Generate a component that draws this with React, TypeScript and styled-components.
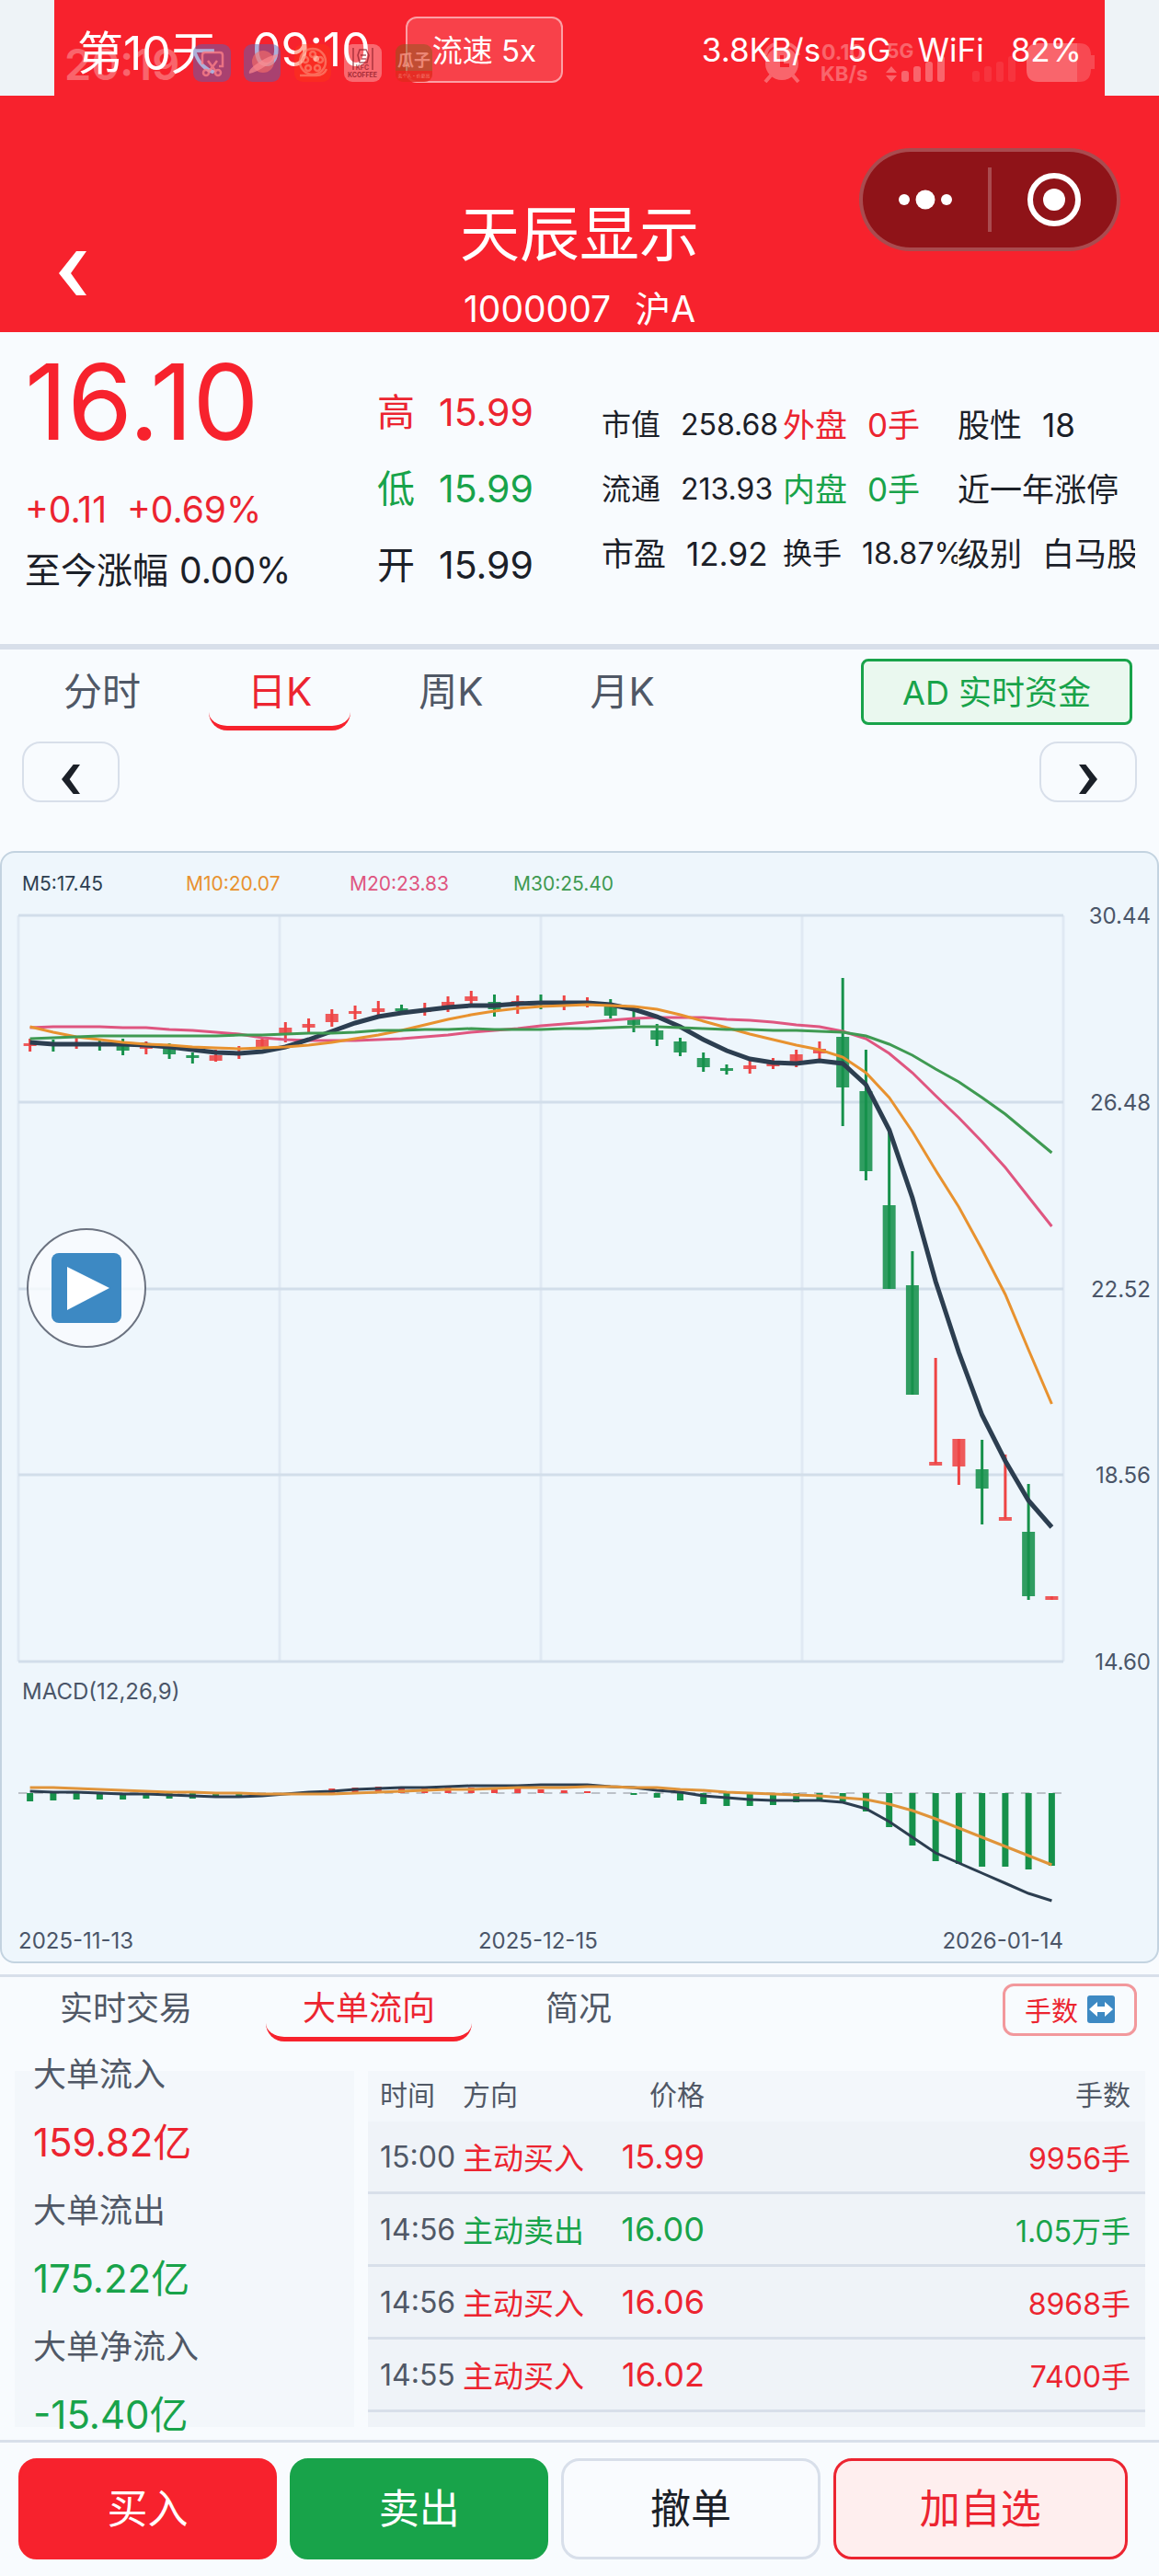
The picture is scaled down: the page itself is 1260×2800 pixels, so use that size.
import React, { useState } from "react";
import styled, { createGlobalStyle } from "styled-components";

const color = {
  red: "#f7222d",
  redText: "#ec2430",
  green: "#18a34a",
  ink: "#1b2028",
  muted: "#505866",
  axis: "#4a5568",
  page: "#f8fbfe",
  line: "#d8dfea",
  panel: "#f3f7fb",
};

const GlobalStyle = createGlobalStyle`
  * { box-sizing: border-box; }
  body {
    margin: 0;
    background: ${color.page};
    color: ${color.ink};
    font-family: Inter, "Noto Sans CJK SC", sans-serif;
  }
  button { font-family: inherit; cursor: pointer; }
`;

type Tone = "up" | "down" | "plain";
const toneColor = (tone?: Tone) =>
  tone === "up" ? color.redText : tone === "down" ? color.green : color.ink;

const Page = styled.div`
  width: 100%;
  overflow: hidden;
`;

/* ---------- status bar ---------- */

const StatusFrame = styled.div`
  padding: 0 59px;
  background: #eef3f7;
`;

const StatusBar = styled.div`
  position: relative;
  display: flex;
  align-items: center;
  justify-content: space-between;
  height: 104px;
  padding: 0 25px;
  background: ${color.red};
  color: #fff;
  white-space: nowrap;
`;

const StatusGroup = styled.div<{ $gap: number; $size: number }>`
  display: flex;
  align-items: center;
  gap: ${(p) => p.$gap}px;
  padding-top: 3px;
  font-size: ${(p) => p.$size}px;
`;

const SpeedButton = styled.button`
  height: 72px;
  padding: 0 27px 2px;
  border: 2px solid rgba(255, 255, 255, 0.5);
  border-radius: 12px;
  background: rgba(255, 255, 255, 0.14);
  color: #fff;
  font-size: 33px;
`;

const GhostLeft = styled.svg`
  position: absolute;
  left: 11px;
  top: 44px;
  overflow: visible;
`;

const GhostRight = styled.svg`
  position: absolute;
  right: 8px;
  top: 44px;
`;

/* ---------- header ---------- */

const Header = styled.header`
  display: grid;
  grid-template-columns: 1fr auto 1fr;
  height: 257px;
  padding: 0 42px 0 42px;
  background: ${color.red};
  color: #fff;
`;

const BackButton = styled.button`
  align-self: end;
  justify-self: start;
  display: flex;
  padding: 24px 22px;
  margin-bottom: 16px;
  border: 0;
  background: none;
`;

const TitleBlock = styled.div`
  align-self: end;
  display: flex;
  flex-direction: column;
  align-items: center;
  gap: 16px;
`;

const Title = styled.h1`
  margin: 0;
  font-size: 65px;
  line-height: 80px;
  font-weight: 400;
`;

const Subtitle = styled.div`
  display: flex;
  gap: 26px;
  font-size: 39px;
  line-height: 50px;
`;

const Capsule = styled.div`
  justify-self: end;
  display: flex;
  align-items: center;
  width: 284px;
  height: 112px;
  margin-top: 57px;
  border: 4px solid rgba(255, 255, 255, 0.24);
  border-radius: 56px;
  background: #8f1318;
`;

const CapsuleButton = styled.button`
  flex: 1;
  display: flex;
  justify-content: center;
  padding: 0;
  border: 0;
  background: none;
`;

const CapsuleRule = styled.span`
  width: 4px;
  height: 70px;
  background: rgba(255, 255, 255, 0.24);
`;

/* ---------- quote ---------- */

const Quote = styled.section`
  display: grid;
  grid-template-columns: minmax(0, 383fr) minmax(0, 244fr) minmax(0, 197fr) minmax(0, 190fr) minmax(0, 193fr);
  height: 345px;
  padding: 16px 26px 0 27px;
  border-bottom: 6px solid ${color.line};
  white-space: nowrap;
`;

const PriceColumn = styled.div`
  display: flex;
  flex-direction: column;
`;

const Price = styled.div`
  margin-bottom: 24px;
  color: ${color.red};
  font-size: 114px;
  line-height: 120px;
`;

const ChangeLine = styled.div<{ $tone: Tone; $gap: number }>`
  display: flex;
  gap: ${(p) => p.$gap}px;
  color: ${(p) => toneColor(p.$tone)};
  font-size: 39px;
  line-height: 66px;
`;

const RangeColumn = styled.div`
  padding-top: 30px;
`;

const RangeRow = styled.div<{ $tone: Tone }>`
  display: flex;
  gap: 26px;
  color: ${(p) => toneColor(p.$tone)};
  font-size: 41px;
  line-height: 83px;
`;

const StatColumn = styled.div`
  padding-top: 50px;
  overflow-x: clip;
`;

const StatRow = styled.div<{ $tone?: Tone; $small?: boolean }>`
  display: flex;
  gap: 22px;
  color: ${(p) => toneColor(p.$tone)};
  font-size: ${(p) => (p.$small ? 32 : 35)}px;
  line-height: 70px;
`;

/* ---------- tabs ---------- */

const TabRow = styled.div<{ $compact?: boolean }>`
  display: flex;
  align-items: flex-start;
  justify-content: space-between;
  padding: ${(p) => (p.$compact ? "0 24px 0 25px" : "0 29px 0 27px")};
`;

const TabList = styled.div<{ $gap: number }>`
  display: flex;
  gap: ${(p) => p.$gap}px;
`;

const Tab = styled.button<{ $active: boolean; $compact?: boolean }>`
  padding: ${(p) => (p.$compact ? "10px 40px 7px" : "16px 42px 7px")};
  border: 0 solid transparent;
  border-bottom: 5px solid ${(p) => (p.$active ? color.red : "transparent")};
  border-radius: 20px;
  background: none;
  color: ${(p) => (p.$active ? color.redText : color.muted)};
  font-size: ${(p) => (p.$compact ? 36 : 42)}px;
  line-height: ${(p) => (p.$compact ? 48 : 60)}px;
`;

const FundButton = styled.button`
  height: 72px;
  margin-top: 10px;
  padding: 0 42px 4px;
  border: 3px solid ${color.green};
  border-radius: 8px;
  background: #eaf8ef;
  color: ${color.green};
  font-size: 36px;
`;

const PagerRow = styled.div`
  display: flex;
  justify-content: space-between;
  padding: 12px 24px 53px;
`;

const PagerButton = styled.button`
  display: flex;
  align-items: center;
  justify-content: center;
  width: 106px;
  height: 66px;
  padding: 16px 0 0;
  border: 2px solid ${color.line};
  border-radius: 20px;
  background: none;
`;

/* ---------- chart ---------- */

const ChartPanel = styled.section`
  border: 2px solid #c3d3e0;
  border-radius: 16px;
  background: #eef6fc;
  color: ${color.axis};
  font-size: 24px;
`;

const Legend = styled.div`
  display: grid;
  grid-template-columns: repeat(4, 178px);
  padding-left: 22px;
  font-size: 21px;
  line-height: 68px;
`;

const LegendItem = styled.span<{ $color: string }>`
  color: ${(p) => p.$color};
`;

const PlotRow = styled.div`
  position: relative;
  display: flex;
  padding-left: 18px;
`;

const PlotArea = styled.div`
  flex: 1;
  min-width: 0;
`;

const Plot = styled.svg`
  display: block;
  width: 100%;
  height: auto;
  overflow: visible;
`;

const PriceScale = styled.div`
  display: flex;
  flex-direction: column;
  justify-content: space-between;
  align-items: flex-end;
  width: 102px;
  margin: -12px 0 -14px;
  padding-right: 7px;
  line-height: 26px;
`;

const PlayButton = styled.button`
  position: absolute;
  left: 27px;
  top: 340px;
  display: flex;
  align-items: center;
  justify-content: center;
  width: 130px;
  height: 130px;
  padding: 0;
  border: 2px solid #6b7280;
  border-radius: 50%;
  background: rgba(249, 251, 254, 0.8);
`;

const MacdArea = styled.div`
  margin: 16px 102px 0 18px;
`;

const MacdLabel = styled.div`
  padding-left: 4px;
  margin-bottom: 4px;
  line-height: 34px;
`;

const Dates = styled.div`
  display: flex;
  justify-content: space-between;
  margin-top: 8px;
  line-height: 44px;
`;

/* ---------- order flow ---------- */

const FlowSection = styled.section`
  margin-top: 12px;
  border-top: 3px solid ${color.line};
`;

const UnitButton = styled.button`
  display: flex;
  align-items: center;
  gap: 10px;
  height: 57px;
  margin-top: 7px;
  padding: 0 21px 2px;
  border: 3px solid #f2989c;
  border-radius: 12px;
  background: none;
  color: ${color.redText};
  font-size: 29px;
`;

const FlowBody = styled.div`
  display: grid;
  grid-template-columns: minmax(0, 369fr) minmax(0, 845fr);
  grid-template-rows: minmax(0, 1fr);
  gap: 15px;
  height: 387px;
  margin: 32px 15px 14px 16px;
`;

const FlowSummary = styled.dl`
  display: flex;
  flex-direction: column;
  justify-content: center;
  margin: 0;
  padding: 0 0 10px 20px;
  background: ${color.panel};
  line-height: 74px;
`;

const FlowLabel = styled.dt`
  flex: none;
  color: ${color.muted};
  font-size: 36px;
`;

const FlowValue = styled.dd<{ $tone: Tone }>`
  flex: none;
  margin: 0;
  color: ${(p) => toneColor(p.$tone)};
  font-size: 42px;
`;

const TradeViewport = styled.div`
  overflow: hidden;
  background: #eff3f8;
`;

const TradeTable = styled.table`
  width: 100%;
  border-collapse: separate;
  border-spacing: 0;
  table-layout: fixed;
  white-space: nowrap;
`;

const HeadCell = styled.th<{ $right?: boolean; $width?: number }>`
  width: ${(p) => (p.$width ? `${p.$width}px` : "auto")};
  height: 55px;
  padding: 0 0 4px;
  background: ${color.panel};
  color: ${color.muted};
  font-size: 30px;
  line-height: 36px;
  font-weight: 400;
  text-align: ${(p) => (p.$right ? "right" : "left")};
  &:first-child { padding-left: 13px; }
  &:last-child { padding-right: 16px; }
`;

const Cell = styled.td<{ $right?: boolean; $tone?: Tone; $size: number }>`
  height: 79px;
  padding: 0;
  border-bottom: 3px solid ${color.line};
  color: ${(p) => (p.$tone ? toneColor(p.$tone) : color.muted)};
  font-size: ${(p) => p.$size}px;
  text-align: ${(p) => (p.$right ? "right" : "left")};
  &:first-child { padding-left: 13px; }
  &:last-child { padding-right: 16px; }
`;

/* ---------- actions ---------- */

const ActionBar = styled.footer`
  display: grid;
  grid-template-columns: repeat(3, minmax(0, 281fr)) minmax(0, 320fr);
  gap: 14px;
  padding: 17px 34px 18px 20px;
  border-top: 3px solid ${color.line};
`;

const ActionButton = styled.button<{ $bg: string; $fg: string; $edge: string }>`
  height: 110px;
  padding: 0 0 6px;
  border: 3px solid ${(p) => p.$edge};
  border-radius: 20px;
  background: ${(p) => p.$bg};
  color: ${(p) => p.$fg};
  font-size: 44px;
`;

/* ---------- data ---------- */

// Each candle: high, low, body top, body bottom (offsets in the plot), rising flag.
const candles: [number, number, number, number, 0 | 1][] = [
  [134, 148, 139, 142, 1], [135, 148, 138, 141, 0], [133, 145, 139, 141, 1],
  [136, 147, 139, 141, 0], [134, 152, 140, 147, 0], [137, 151, 142, 145, 1],
  [139, 156, 145, 151, 0], [149, 161, 152, 155, 0], [146, 159, 152, 158, 1],
  [142, 156, 148, 151, 1], [133, 145, 135, 144, 1], [116, 138, 122, 130, 1],
  [112, 127, 118, 122, 1], [102, 121, 107, 116, 1], [98, 113, 104, 107, 1],
  [93, 109, 101, 105, 1], [97, 106, 101, 104, 0], [95, 109, 103, 105, 1],
  [88, 105, 94, 101, 1], [82, 96, 88, 93, 1], [86, 110, 94, 102, 0],
  [87, 107, 93, 98, 1], [86, 102, 94, 96, 0], [87, 103, 94, 96, 1],
  [89, 100, 94, 96, 1], [91, 112, 99, 109, 0], [104, 127, 112, 119, 0],
  [118, 142, 125, 135, 0], [133, 153, 137, 149, 0], [149, 170, 155, 165, 0],
  [162, 173, 166, 169, 0], [158, 172, 163, 167, 1], [155, 167, 161, 164, 1],
  [146, 165, 151, 159, 1], [137, 156, 145, 150, 1], [68, 229, 132, 187, 0],
  [146, 288, 191, 278, 0], [236, 406, 315, 406, 0], [365, 521, 402, 521, 0],
  [481, 596, 594, 598, 1], [569, 619, 569, 599, 1], [570, 662, 602, 623, 0],
  [586, 656, 654, 658, 1], [618, 744, 670, 740, 0], [740, 744, 740, 744, 1],
];

const averages = [
  {
    label: "M20:23.83", color: "#df5680", width: 3,
    points: [122, 121, 121, 121, 122, 122, 124, 125, 127, 129, 133, 135, 136, 136, 136, 135, 134, 132, 130, 127, 125, 123, 120, 118, 116, 114, 112, 111, 111, 111, 113, 114, 116, 119, 121, 126, 134, 150, 171, 196, 220, 246, 274, 306, 338],
  },
  {
    label: "M5:17.45", color: "#2c3e50", width: 5,
    points: [138, 140, 140, 140, 140, 141, 143, 146, 149, 150, 148, 143, 135, 126, 117, 110, 106, 103, 100, 98, 98, 96, 95, 95, 95, 97, 102, 110, 121, 135, 147, 156, 160, 161, 158, 161, 184, 233, 307, 398, 475, 543, 593, 636, 665],
  },
  {
    label: "M10:20.07", color: "#e8922f", width: 3,
    points: [121, 127, 132, 135, 138, 140, 141, 143, 144, 145, 144, 143, 141, 138, 134, 130, 125, 119, 113, 108, 104, 101, 99, 98, 97, 98, 99, 102, 108, 115, 122, 129, 135, 141, 146, 154, 171, 198, 235, 277, 317, 363, 412, 472, 531],
  },
  {
    label: "M30:25.40", color: "#3f9a52", width: 3,
    points: [134, 133, 132, 131, 131, 131, 131, 131, 131, 130, 130, 129, 128, 128, 127, 125, 125, 124, 124, 123, 124, 124, 124, 123, 123, 122, 121, 121, 122, 123, 124, 124, 125, 125, 126, 127, 131, 140, 152, 167, 181, 198, 216, 237, 258],
  },
];
const legendOrder = [1, 2, 0, 3];

const histogram = [9, 8, 7, 7, 7, 6, 6, 6, 5, 3, 1, 0, -2, -5, -6, -7, -6, -6, -6, -6, -6, -5, -4, -3, -2, 0, 2, 5, 8, 12, 14, 14, 13, 10, 8, 9, 20, 37, 57, 74, 77, 80, 80, 83, 79];
const dif = [-2, -1, -1, 0, 1, 1, 2, 3, 4, 4, 3, 1, -1, -2, -4, -5, -6, -6, -7, -8, -8, -8, -9, -9, -9, -7, -6, -3, -1, 3, 5, 7, 8, 8, 8, 10, 17, 31, 48, 65, 76, 87, 98, 109, 117];
const dea = [-6, -6, -5, -4, -3, -2, -1, -1, 0, 0, 1, 1, 1, 1, 0, -1, -2, -3, -4, -4, -5, -6, -6, -6, -7, -7, -6, -6, -4, -3, -1, 0, 1, 2, 3, 5, 7, 12, 19, 28, 38, 48, 58, 68, 78];

const PLOT_W = 1136;
const PLOT_H = 811;
const STEP = PLOT_W / candles.length;
const xAt = (i: number) => (i + 0.5) * STEP;
const toPoints = (values: number[], base = 0) =>
  values.map((v, i) => `${xAt(i).toFixed(1)},${v + base}`).join(" ");

const flows: { label: string; value: string; tone: Tone }[] = [
  { label: "大单流入", value: "159.82亿", tone: "up" },
  { label: "大单流出", value: "175.22亿", tone: "down" },
  { label: "大单净流入", value: "-15.40亿", tone: "down" },
];

const trades: { time: string; side: string; price: string; volume: string; tone: Tone }[] = [
  { time: "15:00", side: "主动买入", price: "15.99", volume: "9956手", tone: "up" },
  { time: "14:56", side: "主动卖出", price: "16.00", volume: "1.05万手", tone: "down" },
  { time: "14:56", side: "主动买入", price: "16.06", volume: "8968手", tone: "up" },
  { time: "14:55", side: "主动买入", price: "16.02", volume: "7400手", tone: "up" },
];

/* ---------- drawings ---------- */

function Chevron({ height, fill, flip }: { height: number; fill: string; flip?: boolean }) {
  return (
    <svg width={(height * 5) / 8} height={height} viewBox="0 0 30 48" aria-hidden="true">
      <path d={flip ? "M0 0h11l19 24-19 24H0l17-24z" : "M30 0H19L0 24l19 24h11L13 24z"} fill={fill} />
    </svg>
  );
}

function GhostIconsLeft() {
  return (
    <GhostLeft width="410" height="50" viewBox="70 44 410 50" aria-hidden="true">
      <text x="70" y="87" fontSize="47" fontWeight="600" fill="#fff" opacity="0.3" fontFamily="Inter">20:19</text>
      <g>
        <rect x="210" y="48" width="41" height="41" rx="9" fill="#5c5fb4" opacity="0.5" />
        <g fill="none" stroke="#fb7f88" strokeWidth="2.5" opacity="0.8">
          <path d="M220 70V60q0-3 3-3h16q3 0 3 3v12h-4" />
          <path d="M226 66l9 12M236 66l-9 12" />
          <circle cx="224" cy="79" r="3" />
          <circle cx="237" cy="79" r="3" />
        </g>
      </g>
      <g>
        <rect x="265" y="48" width="40" height="41" rx="9" fill="#5c5fb4" opacity="0.5" />
        <circle cx="286" cy="67" r="12" fill="#fb6f68" opacity="0.6" />
        <path d="M271 80q-2-4 10-12t21-9q0 4-12 12t-19 9z" fill="#fb8a90" opacity="0.7" />
      </g>
      <g>
        <rect x="320" y="48" width="40" height="41" rx="9" fill="#ff3a12" opacity="0.4" />
        <g fill="none" stroke="#fd8c76" strokeWidth="2.5" opacity="0.65">
          <circle cx="340" cy="67" r="14" />
          <circle cx="340" cy="59" r="3" />
          <circle cx="332" cy="65" r="3" />
          <circle cx="348" cy="65" r="3" />
          <circle cx="335" cy="74" r="3" />
          <circle cx="345" cy="74" r="3" />
          <path d="M326 82h18q8 0 11-7" />
        </g>
      </g>
      <g>
        <rect x="374" y="48" width="41" height="41" rx="9" fill="#fff" opacity="0.32" />
        <g fill="none" stroke="#8f1c2a" strokeWidth="1.5" opacity="0.7">
          <path d="M391 54h7l3 6-2 8h-8l-2-8z" />
          <path d="M392 60h6M393 64h5M384 52v24M405 52v24" />
        </g>
        <text x="394" y="76" fontSize="7" fontWeight="700" fill="#8f1c2a" opacity="0.7" textAnchor="middle" fontFamily="Inter">KFC</text>
        <text x="394" y="84" fontSize="7" fontWeight="700" fill="#8f1c2a" opacity="0.8" textAnchor="middle" fontFamily="Inter">KCOFFEE</text>
      </g>
      <g>
        <rect x="430" y="48" width="40" height="41" rx="9" fill="#8a5a1c" opacity="0.5" />
        <path d="M430 77h40v3q0 9-9 9h-22q-9 0-9-9z" fill="#f5201f" opacity="0.7" />
        <text x="450" y="72" fontSize="18" fontWeight="700" fill="#fb9a8c" opacity="0.75" textAnchor="middle" fontFamily="Noto Sans CJK SC">瓜子</text>
        <text x="450" y="84" fontSize="5" fill="#fb9a8c" opacity="0.75" textAnchor="middle" fontFamily="Noto Sans CJK SC">卖个人·价更高</text>
      </g>
    </GhostLeft>
  );
}

function GhostIconsRight() {
  return (
    <GhostRight width="364" height="50" viewBox="829 44 364 50" fill="#fff" aria-hidden="true">
      <g opacity="0.3">
        <circle cx="850" cy="69" r="18" />
        <path d="M832 60q2-9 10-12M868 60q-2-9-10-12M838 82l-6 7M862 82l6 7" fill="none" stroke="#fff" strokeWidth="4" />
        <path d="M850 60v11h8" fill="none" stroke={color.red} strokeWidth="4" />
        <text x="893" y="65" fontSize="23" fontWeight="700" fontFamily="Inter">0.10</text>
        <text x="892" y="88" fontSize="22" fontWeight="700" fontFamily="Inter">KB/s</text>
        <text x="964" y="63" fontSize="21" fontWeight="700" fontFamily="Inter">5G</text>
        <path d="M963 79l6-7 6 7zM963 82l6 7 6-7z" />
        <rect x="980" y="77" width="8" height="12" rx="3" />
        <rect x="993" y="72" width="8" height="17" rx="3" />
        <rect x="1006" y="67" width="8" height="22" rx="3" />
        <rect x="1019" y="61" width="8" height="28" rx="3" />
        <path d="M1129 47h42v42h-42q-13 0-13-13V60q0-13 13-13z" />
      </g>
      <g opacity="0.08">
        <rect x="1057" y="77" width="8" height="12" rx="3" />
        <rect x="1070" y="72" width="8" height="17" rx="3" />
        <rect x="1083" y="67" width="8" height="22" rx="3" />
        <rect x="1096" y="61" width="8" height="28" rx="3" />
      </g>
      <path d="M1171 47h2q13 0 13 13h4v15h-4q0 14-13 14h-2z" opacity="0.18" />
    </GhostRight>
  );
}

function CandlePlot() {
  return (
    <Plot viewBox={`0 0 ${PLOT_W} ${PLOT_H}`} role="img" aria-label="日K">
      {[0, 1, 2, 3, 4].map((n) => (
        <line key={`v${n}`} x1={n * 284} x2={n * 284} y1="0" y2={PLOT_H} stroke="#e0e9f3" strokeWidth="3" />
      ))}
      {[0, 203, 406, 608, 811].map((y) => (
        <line key={`h${y}`} x1="0" x2={PLOT_W} y1={y} y2={y} stroke="#d2deea" strokeWidth="3" />
      ))}
      {candles.map(([high, low, top, bottom, rising], i) => {
        const fill = rising ? "#ee4444" : "#16914b";
        return (
          <g key={i} fill={fill}>
            <rect x={xAt(i) - 7} y={top} width="14" height={bottom - top} opacity="0.88" />
            <rect x={xAt(i) - 1.5} y={high} width="3" height={low - high} />
          </g>
        );
      })}
      {averages.map((line) => (
        <polyline key={line.label} points={toPoints(line.points)} fill="none" stroke={line.color} strokeWidth={line.width} />
      ))}
    </Plot>
  );
}

function MacdPlot() {
  const zero = 89;
  return (
    <Plot viewBox={`0 0 ${PLOT_W} 220`} role="img" aria-label="MACD">
      <line x1="0" x2={PLOT_W} y1={zero} y2={zero} stroke="#bcc1c8" strokeWidth="2" strokeDasharray="9.5 7.8" />
      {histogram.map((v, i) => (
        <rect key={i} x={xAt(i) - 3.5} y={v < 0 ? zero + v : zero} width="7" height={Math.abs(v)} fill={v < 0 ? "#ee4444" : "#16914b"} />
      ))}
      <polyline points={toPoints(dif, zero)} fill="none" stroke="#2c3e50" strokeWidth="3" />
      <polyline points={toPoints(dea, zero)} fill="none" stroke="#e0943a" strokeWidth="3" />
    </Plot>
  );
}

/* ---------- page ---------- */

export default function App() {
  const [period, setPeriod] = useState("日K");
  const [view, setView] = useState("大单流向");

  return (
    <Page>
      <GlobalStyle />
      <StatusFrame>
        <StatusBar>
          <StatusGroup $gap={38} $size={50}>
            <span>第10天</span>
            <span>09:10</span>
            <SpeedButton type="button">流速 5x</SpeedButton>
          </StatusGroup>
          <StatusGroup $gap={29} $size={35}>
            <span>3.8KB/s</span>
            <span>5G</span>
            <span>WiFi</span>
            <span>82%</span>
          </StatusGroup>
          <GhostIconsLeft />
          <GhostIconsRight />
        </StatusBar>
      </StatusFrame>

      <Header>
        <BackButton type="button" aria-label="返回">
          <Chevron height={48} fill="#fff" />
        </BackButton>
        <TitleBlock>
          <Title>天辰显示</Title>
          <Subtitle>
            <span>1000007</span>
            <span>沪A</span>
          </Subtitle>
        </TitleBlock>
        <Capsule>
          <CapsuleButton type="button" aria-label="更多">
            <svg width="60" height="22" viewBox="0 0 60 22" fill="#fff">
              <circle cx="7" cy="11" r="6" />
              <circle cx="30" cy="11" r="10.5" />
              <circle cx="53" cy="11" r="6" />
            </svg>
          </CapsuleButton>
          <CapsuleRule />
          <CapsuleButton type="button" aria-label="关闭">
            <svg width="60" height="60" viewBox="0 0 60 60" fill="#fff">
              <circle cx="30" cy="30" r="26" fill="none" stroke="#fff" strokeWidth="6" />
              <circle cx="30" cy="30" r="12" />
            </svg>
          </CapsuleButton>
        </Capsule>
      </Header>

      <Quote>
        <PriceColumn>
          <Price>16.10</Price>
          <ChangeLine $tone="up" $gap={22}>
            <span>+0.11</span>
            <span>+0.69%</span>
          </ChangeLine>
          <ChangeLine $tone="plain" $gap={12}>
            <span>至今涨幅</span>
            <span>0.00%</span>
          </ChangeLine>
        </PriceColumn>
        <RangeColumn>
          <RangeRow $tone="up"><span>高</span><span>15.99</span></RangeRow>
          <RangeRow $tone="down"><span>低</span><span>15.99</span></RangeRow>
          <RangeRow $tone="plain"><span>开</span><span>15.99</span></RangeRow>
        </RangeColumn>
        <StatColumn>
          <StatRow $small><span>市值</span><span>258.68</span></StatRow>
          <StatRow $small><span>流通</span><span>213.93</span></StatRow>
          <StatRow><span>市盈</span><span>12.92</span></StatRow>
        </StatColumn>
        <StatColumn>
          <StatRow $tone="up"><span>外盘</span><span>0手</span></StatRow>
          <StatRow $tone="down"><span>内盘</span><span>0手</span></StatRow>
          <StatRow $small><span>换手</span><span>18.87%</span></StatRow>
        </StatColumn>
        <StatColumn>
          <StatRow><span>股性</span><span>18</span></StatRow>
          <StatRow><span>近一年涨停</span></StatRow>
          <StatRow><span>级别</span><span>白马股</span></StatRow>
        </StatColumn>
      </Quote>

      <TabRow>
        <TabList $gap={32} role="tablist">
          {["分时", "日K", "周K", "月K"].map((name) => (
            <Tab key={name} type="button" role="tab" aria-selected={period === name} $active={period === name} onClick={() => setPeriod(name)}>
              {name}
            </Tab>
          ))}
        </TabList>
        <FundButton type="button">AD 实时资金</FundButton>
      </TabRow>
      <PagerRow>
        <PagerButton type="button" aria-label="上一只">
          <Chevron height={32} fill={color.ink} />
        </PagerButton>
        <PagerButton type="button" aria-label="下一只">
          <Chevron height={32} fill={color.ink} flip />
        </PagerButton>
      </PagerRow>

      <ChartPanel>
        <Legend>
          {legendOrder.map((n) => (
            <LegendItem key={n} $color={averages[n].color}>{averages[n].label}</LegendItem>
          ))}
        </Legend>
        <PlotRow>
          <PlotArea>
            <CandlePlot />
          </PlotArea>
          <PriceScale>
            {["30.44", "26.48", "22.52", "18.56", "14.60"].map((p) => (
              <span key={p}>{p}</span>
            ))}
          </PriceScale>
          <PlayButton type="button" aria-label="播放">
            <svg width="76" height="76" viewBox="0 0 76 76">
              <rect width="76" height="76" rx="8" fill="#3d89c3" />
              <path d="M17 15l46 23-46 24z" fill="#fff" />
            </svg>
          </PlayButton>
        </PlotRow>
        <MacdArea>
          <MacdLabel>MACD(12,26,9)</MacdLabel>
          <MacdPlot />
          <Dates>
            <span>2025-11-13</span>
            <span>2025-12-15</span>
            <span>2026-01-14</span>
          </Dates>
        </MacdArea>
      </ChartPanel>

      <FlowSection>
        <TabRow $compact>
          <TabList $gap={40} role="tablist">
            {["实时交易", "大单流向", "简况"].map((name) => (
              <Tab key={name} type="button" role="tab" aria-selected={view === name} $active={view === name} $compact onClick={() => setView(name)}>
                {name}
              </Tab>
            ))}
          </TabList>
          <UnitButton type="button">
            手数
            <svg width="30" height="30" viewBox="0 0 30 30" aria-hidden="true">
              <rect width="30" height="30" rx="3" fill="#3d89c3" />
              <path d="M2 15l9-8v5h8V7l9 8-9 8v-5h-8v5z" fill="#fff" />
            </svg>
          </UnitButton>
        </TabRow>
        <FlowBody>
          <FlowSummary>
            {flows.map((f) => (
              <React.Fragment key={f.label}>
                <FlowLabel>{f.label}</FlowLabel>
                <FlowValue $tone={f.tone}>{f.value}</FlowValue>
              </React.Fragment>
            ))}
          </FlowSummary>
          <TradeViewport>
            <TradeTable>
              <thead>
                <tr>
                  <HeadCell $width={103}>时间</HeadCell>
                  <HeadCell $width={145}>方向</HeadCell>
                  <HeadCell $width={118} $right>价格</HeadCell>
                  <HeadCell $right>手数</HeadCell>
                </tr>
              </thead>
              <tbody>
                {trades.map((t, i) => (
                  <tr key={i}>
                    <Cell $size={32}>{t.time}</Cell>
                    <Cell $size={33} $tone={t.tone}>{t.side}</Cell>
                    <Cell $size={36} $tone={t.tone} $right>{t.price}</Cell>
                    <Cell $size={32} $tone={t.tone} $right>{t.volume}</Cell>
                  </tr>
                ))}
              </tbody>
            </TradeTable>
          </TradeViewport>
        </FlowBody>
      </FlowSection>

      <ActionBar>
        <ActionButton type="button" $bg={color.red} $fg="#fff" $edge={color.red}>买入</ActionButton>
        <ActionButton type="button" $bg={color.green} $fg="#fff" $edge={color.green}>卖出</ActionButton>
        <ActionButton type="button" $bg="#f9fbfe" $fg={color.ink} $edge={color.line}>撤单</ActionButton>
        <ActionButton type="button" $bg="#feeeee" $fg={color.redText} $edge={color.redText}>加自选</ActionButton>
      </ActionBar>
    </Page>
  );
}
